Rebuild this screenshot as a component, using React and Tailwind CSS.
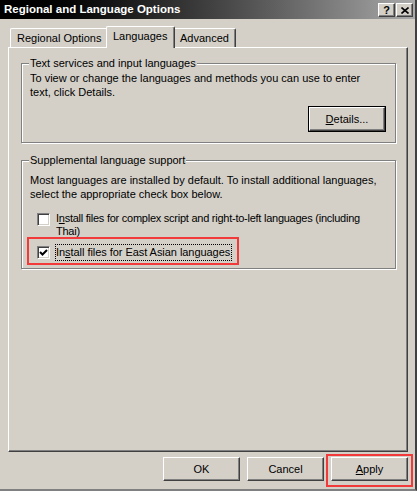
import React from "react";

const bevel =
  "bg-[#d4d0c8] border border-t-white border-l-white border-r-[#404040] border-b-[#404040] shadow-[inset_-1px_-1px_#808080,inset_1px_1px_#d4d0c8]";

function Button({ children, className = "" }) {
  return (
    <div className={`flex items-center justify-center h-[24px] ${bevel} ${className}`}>
      {children}
    </div>
  );
}

function CheckBox({ checked }) {
  return (
    <div className="w-[13px] h-[13px] shrink-0 bg-white border border-t-[#808080] border-l-[#808080] border-r-white border-b-white shadow-[inset_1px_1px_#404040,inset_-1px_-1px_#d4d0c8] flex items-center justify-center">
      {checked && (
        <svg width="9" height="9" viewBox="0 0 9 9">
          <path d="M1 4 L3.5 6.5 L8 2" fill="none" stroke="#000" strokeWidth="2" />
        </svg>
      )}
    </div>
  );
}

function GroupBox({ title, children, className = "" }) {
  return (
    <div
      className={`ml-[12px] w-[375px] border border-[#808080] shadow-[inset_1px_1px_#fff,1px_1px_#fff] ${className}`}
    >
      <span className="block w-fit -mt-[7px] ml-[7px] px-[1px] bg-[#d4d0c8] leading-[13px]">
        {title}
      </span>
      {children}
    </div>
  );
}

export default function App() {
  return (
    <div
      className="w-[417px] h-[491px] bg-[#d4d0c8] flex flex-col text-[11px] text-black border-r-2 border-b-2 border-r-[#404040] border-b-[#808080]"
      style={{ fontFamily: '"Liberation Sans", Arial, sans-serif' }}
    >
      {/* title bar */}
      <div className="h-[19px] flex items-center bg-linear-to-r from-black to-[#aaaaaa] pl-[4px] pr-[2px]">
        <span className="text-white font-bold text-[11.5px] leading-none">
          Regional and Language Options
        </span>
        <div className="ml-auto flex gap-[1px] mt-[1px]">
          <div className={`w-[17px] h-[14px] flex items-center justify-center ${bevel}`}>
            <span className="font-bold text-[11px] leading-none">?</span>
          </div>
          <div className={`w-[17px] h-[14px] flex items-center justify-center ${bevel}`}>
            <svg width="8" height="7" viewBox="0 0 8 7">
              <path d="M0.5 0.5 L7.5 6.5 M7.5 0.5 L0.5 6.5" stroke="#000" strokeWidth="1.6" />
            </svg>
          </div>
        </div>
      </div>

      <div className="px-[8px] flex flex-col">
        {/* tabs */}
        <div className="flex items-end pt-[7px] pl-[2px]">
          <div className="h-[19px] w-[96px] pl-[6px] flex items-center border-t border-l border-t-white border-l-white rounded-tl-[2px]">
            Regional Options
          </div>
          <div className="relative z-10 -mb-[1px] h-[22px] w-[69px] pl-[6px] pb-[3px] flex items-center bg-[#d4d0c8] border-t border-l border-r border-t-white border-l-white border-r-[#404040] shadow-[inset_-1px_0_#808080] rounded-t-[2px]">
            Languages
          </div>
          <div className="h-[19px] w-[61px] pl-[5px] flex items-center border-t border-r border-t-white border-r-[#404040] shadow-[inset_-1px_0_#808080] rounded-tr-[2px]">
            Advanced
          </div>
        </div>

        {/* tab page */}
        <div className="w-[400px] h-[405px] border border-t-white border-l-white border-r-[#404040] border-b-[#404040] shadow-[inset_-1px_-1px_#808080] flex flex-col">
          <GroupBox title="Text services and input languages" className="mt-[15px]">
            <p className="mt-[1px] pl-[8px] leading-[14px]">
              To view or change the languages and methods you can use to enter
              <br />
              text, click Details.
            </p>
            <div className="flex justify-end mt-[7px] mb-[10px] mr-[9px]">
              <div className="border border-black">
                <Button className="w-[76px] h-[21px]">
                  <span>
                    <span className="underline">D</span>etails...
                  </span>
                </Button>
              </div>
            </div>
          </GroupBox>

          <GroupBox title="Supplemental language support" className="mt-[17px]">
            <p className="mt-[6px] pl-[8px] leading-[14px]">
              Most languages are installed by default. To install additional languages,
              <br />
              select the appropriate check box below.
            </p>
            <div className="flex mt-[12px] ml-[15px] gap-[6px]">
              <CheckBox checked={false} />
              <span className="leading-[13px] -mt-[1px] tracking-[-0.25px]">
                I<span className="underline">n</span>stall files for complex script and
                right-to-left languages (including
                <br />
                Thai)
              </span>
            </div>
            <div className="relative w-fit flex items-center mt-[6px] mb-[7px] ml-[15px] gap-[5px]">
              <CheckBox checked />
              <span className="leading-[13px] py-[1px] pr-[1px] border border-dotted border-black tracking-[-0.05px]">
                In<span className="underline">s</span>tall files for East Asian languages
              </span>
              <div className="absolute left-[-10px] right-[-7px] top-[-7px] bottom-[-4px] border-2 border-[#f23a3a]" />
            </div>
          </GroupBox>
        </div>

        {/* dialog buttons */}
        <div className="flex justify-end gap-[7px] mt-[5px] w-[400px]">
          <Button className="w-[77px]">OK</Button>
          <Button className="w-[77px]">Cancel</Button>
          <div className="relative">
            <Button className="w-[77px]">
              <span>
                <span className="underline">A</span>pply
              </span>
            </Button>
            <div className="absolute left-[-5px] right-[-5px] top-[-3px] bottom-[-6px] border-2 border-[#f23a3a]" />
          </div>
        </div>
      </div>
    </div>
  );
}
